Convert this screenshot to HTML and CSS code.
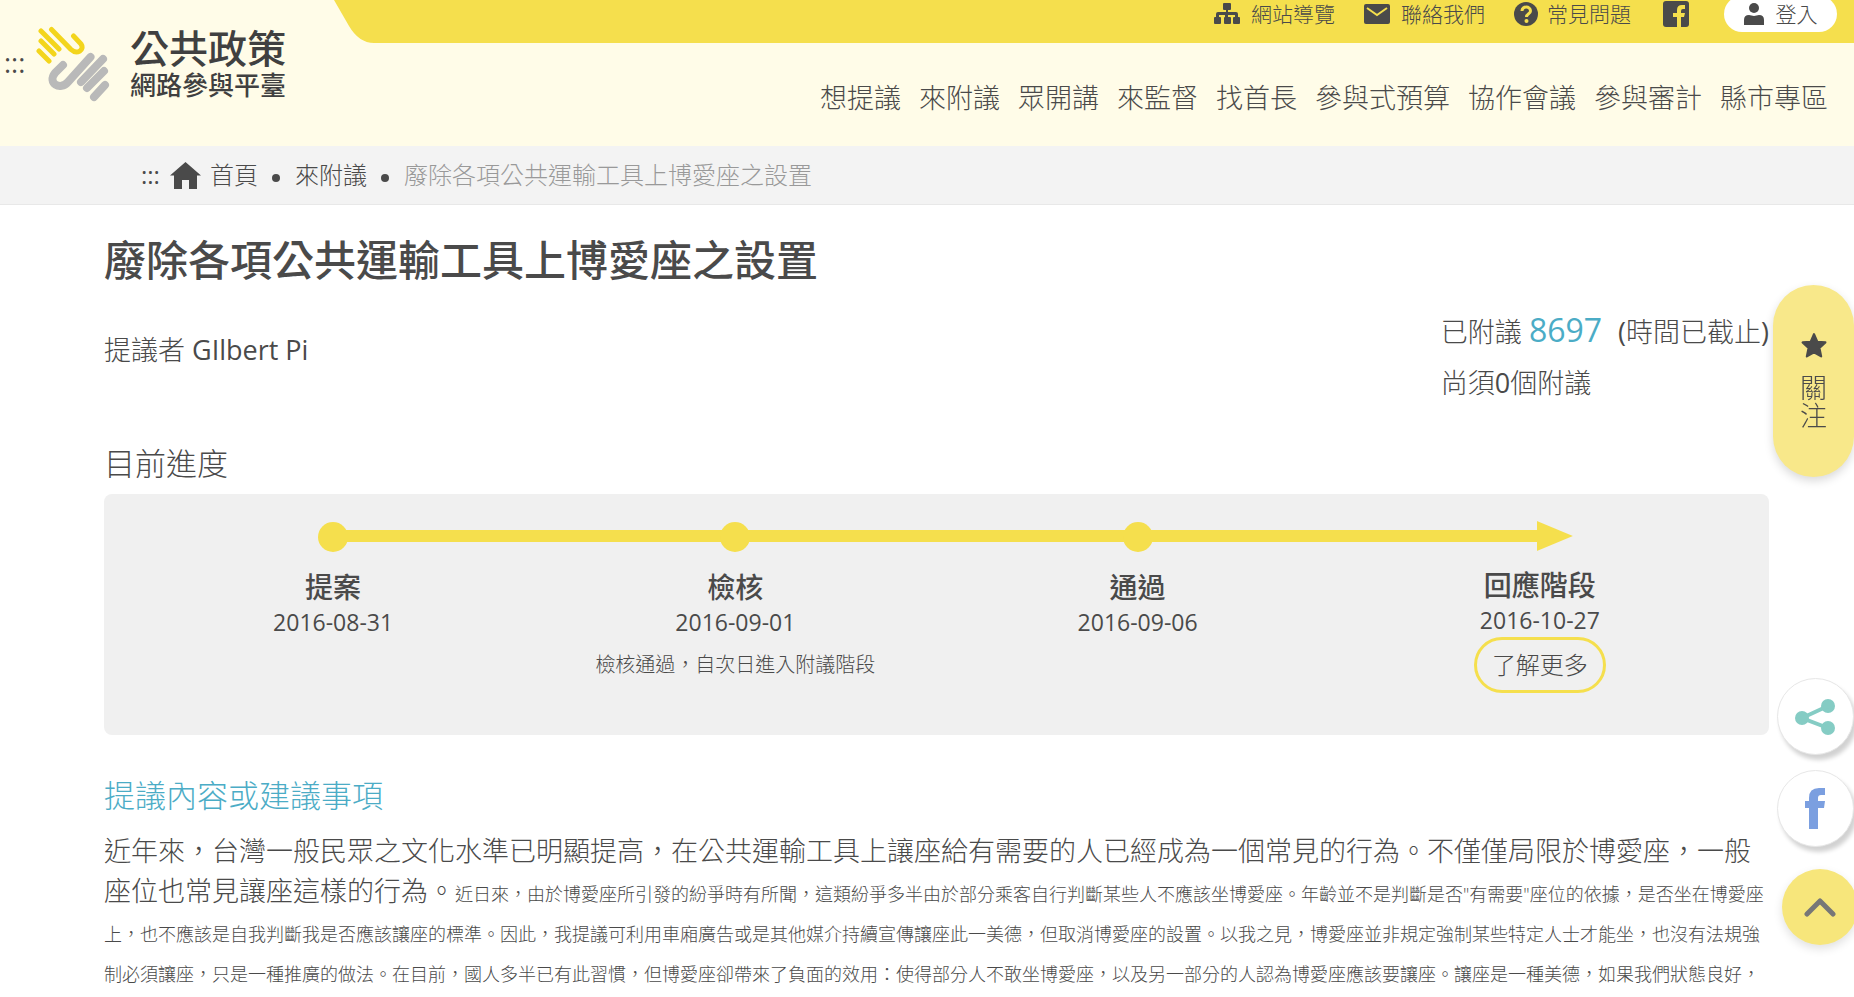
FILE: index.html
```html
<!DOCTYPE html>
<html lang="zh-Hant">
<head>
<meta charset="utf-8">
<meta name="viewport" content="width=device-width, initial-scale=1">
<title>公共政策網路參與平臺</title>
<link rel="stylesheet" href="styles.css">
</head>
<body>
<header class="header">
  <div class="brand">
    <a class="access-key" href="#nav">:::</a>
    <a class="logo" href="#">
      <svg class="logo-mark" viewBox="0 0 74 76" aria-hidden="true">
        <g fill="none" stroke="#f3d51c" stroke-width="5" stroke-linecap="round" stroke-linejoin="round">
          <path d="M5 5 L23 23M5 15 L18 28M3 25 L13 35"/>
          <path d="M15.500 3.500 L35 23.500 C41 29 49 24 45 18 L37.500 10"/>
        </g>
        <g fill="none" stroke="#b9b9b9" stroke-width="8" stroke-linecap="round">
          <path d="M54.500 31 L32 56 C24 65 11 57 19 47 L27 39"/>
          <path d="M67 33 L45 56M68 45 L51 62M69 59 L58 71"/>
        </g>
      </svg>
      <span class="logo-text"><span class="logo-main">公共政策</span><span class="logo-sub">網路參與平臺</span></span>
    </a>
  </div>
  <div class="header-right">
    <div class="topbar">
      <svg class="topbar-edge" viewBox="0 0 40 43" aria-hidden="true"><path fill="#fffce8" d="M0 0 L15 26 Q25 43 40 43 L0 43Z"/></svg>
      <a class="top-link" href="#"><svg class="ico-map" viewBox="0 0 26 22" aria-hidden="true"><g fill="#4a4a4a"><rect x="9" y="0" width="8" height="7" rx="1"/><rect x="0" y="14" width="7" height="7" rx="1"/><rect x="10" y="14" width="7" height="7" rx="1"/><rect x="19" y="14" width="7" height="7" rx="1"/><path d="M12 6h2v3h8q2 0 2 2v4h-3v-3h-7v3h-3v-3H5v3H2v-4q0-2 2-2h8z"/></g></svg>網站導覽</a>
      <a class="top-link" href="#"><svg class="ico-mail" viewBox="0 0 26 20" aria-hidden="true"><rect width="26" height="20" rx="2" fill="#4a4a4a"/><path d="M3 4 L13 11 L23 4" fill="none" stroke="#f5df4d" stroke-width="2"/></svg>聯絡我們</a>
      <a class="top-link help" href="#"><svg class="ico-help" viewBox="0 0 24 24" aria-hidden="true"><circle cx="12" cy="12" r="12" fill="#4a4a4a"/><path d="M8 9 C8 3.600 16.500 4 16.500 9 C16.500 12 12.500 11.500 12.500 15" fill="none" stroke="#f5df4d" stroke-width="3"/><circle cx="12.500" cy="19" r="2" fill="#f5df4d"/></svg>常見問題</a>
      <a class="top-fb" href="#" aria-label="Facebook"><svg viewBox="0 0 26 26" aria-hidden="true"><rect width="26" height="26" rx="3" fill="#4a4a4a"/><path d="M14 26V16h-4v-4h4V9q0-5 5-5h3v4h-2q-2 0-2 2v2h4l-1 4h-3v10z" fill="#f5df4d"/></svg></a>
      <button class="login" type="button"><svg viewBox="0 0 20 22" aria-hidden="true"><g fill="#4a4a4a"><circle cx="10" cy="5" r="5"/><path d="M0 22v-5q0-5 5-5l5 1 5-1q5 0 5 5v5z"/></g></svg>登入</button>
    </div>
    <nav class="nav" id="nav">
      <a href="#">想提議</a><a href="#">來附議</a><a href="#">眾開講</a><a href="#">來監督</a><a href="#">找首長</a><a href="#">參與式預算</a><a href="#">協作會議</a><a href="#">參與審計</a><a href="#">縣市專區</a>
    </nav>
  </div>
</header>

<nav class="crumbs" aria-label="路徑">
  <a class="crumb-key" href="#main">:::</a>
  <svg class="home" viewBox="0 0 31 27" aria-hidden="true"><path fill="#4a4a4a" d="M15.500 0 L31 13.500 H27 V27 H19 V18 H12 V27 H4 V13.500 H0Z"/></svg>
  <a href="#">首頁</a><i class="dot"></i><a href="#">來附議</a><i class="dot"></i><span class="current">廢除各項公共運輸工具上博愛座之設置</span>
</nav>

<main class="main" id="main">
  <h1 class="title">廢除各項公共運輸工具上博愛座之設置</h1>
  <div class="summary">
    <p class="author">提議者 <span class="latin">GIlbert Pi</span></p>
    <div class="votes">
      <p>已附議 <span class="count">8697</span><span class="closed"><span class="latin">(</span>時間已截止<span class="latin">)</span></span></p>
      <p>尚須<span class="latin">0</span>個附議</p>
    </div>
  </div>

  <h2 class="progress-title">目前進度</h2>
  <ol class="progress">
    <li class="step"><span class="track"></span><h3>提案</h3><time class="latin">2016-08-31</time></li>
    <li class="step"><span class="track"></span><h3>檢核</h3><time class="latin">2016-09-01</time><p class="note">檢核通過，自次日進入附議階段</p></li>
    <li class="step"><span class="track"></span><h3>通過</h3><time class="latin">2016-09-06</time></li>
    <li class="step last"><span class="track"></span><h3>回應階段</h3><time class="latin">2016-10-27</time><button class="more" type="button">了解更多</button></li>
  </ol>

  <h2 class="content-title">提議內容或建議事項</h2>
  <p class="content"><span class="lead">近年來，台灣一般民眾之文化水準已明顯提高，在公共運輸工具上讓座給有需要的人已經成為一個常見的行為。不僅僅局限於博愛座，一般座位也常見讓座這樣的行為。</span>近日來，由於博愛座所引發的紛爭時有所聞，這類紛爭多半由於部分乘客自行判斷某些人不應該坐博愛座。年齡並不是判斷是否"有需要"座位的依據，是否坐在博愛座上，也不應該是自我判斷我是否應該讓座的標準。因此，我提議可利用車廂廣告或是其他媒介持續宣傳讓座此一美德，但取消博愛座的設置。以我之見，博愛座並非規定強制某些特定人士才能坐，也沒有法規強制必須讓座，只是一種推廣的做法。在目前，國人多半已有此習慣，但博愛座卻帶來了負面的效用：使得部分人不敢坐博愛座，以及另一部分的人認為博愛座應該要讓座。讓座是一種美德，如果我們狀態良好，</p>
</main>

<button class="follow" type="button"><svg viewBox="0 0 24 24" aria-hidden="true"><path d="M12 2 L15 9 L22.500 9.600 L17 14.800 L18.600 22.500 L12 18.800 L5.400 22.500 L7 14.800 L1.500 9.600 L9 9Z" fill="#4a4a4a" stroke="#4a4a4a" stroke-width="2" stroke-linejoin="round"/></svg><span>關<br>注</span></button>
<div class="social">
  <button class="round" type="button" aria-label="分享"><svg class="ico-share" viewBox="0 0 40 36" aria-hidden="true"><g fill="#85ccc4"><circle cx="7" cy="19" r="7"/><circle cx="33" cy="7" r="7"/><circle cx="33" cy="29" r="7"/></g><path d="M33 7 L7 19 L33 29" fill="none" stroke="#85ccc4" stroke-width="4"/></svg></button>
  <button class="round" type="button" aria-label="Facebook"><svg class="ico-f" viewBox="0 0 20 41" aria-hidden="true"><path fill="#7b9fe0" d="M4 41V20H0v-7h4V10Q4 0 14 0h6v7h-4q-3 0-3 3v3h7l-1 7h-6v21z"/></svg></button>
</div>
<button class="to-top" type="button" aria-label="回頂端"><svg viewBox="0 0 32 19" aria-hidden="true"><path d="M3 16 L16 3 L29 16" fill="none" stroke="#777" stroke-width="5" stroke-linecap="round" stroke-linejoin="round"/></svg></button>
</body>
</html>
```
FILE: styles.css
```css
* { box-sizing: border-box; }

body {
  margin: 0;
  background: #fff;
  color: #4a4a4a;
  font-family: "Open Sans", "Noto Sans CJK TC", sans-serif;
  font-size: 27px;
  font-weight: 300;
  line-height: 40px;
}

h1, h2, h3, p, ol { margin: 0; padding: 0; }
h2 { font-weight: 300; }
a { color: inherit; text-decoration: none; }
button { border: 0; padding: 0; color: inherit; font: inherit; cursor: pointer; }
svg { display: block; flex: none; }
.latin { font-weight: 400; }

/* Header */
.header { display: flex; height: 146px; background: #fffce8; }
.brand { display: flex; align-items: flex-start; flex: 0 0 334px; padding: 26px 0 0 4px; }
.access-key { width: 32px; margin-top: 17px; font-weight: 400; }
.logo { display: flex; gap: 20px; font-weight: 500; color: #404040; }
.logo-mark { width: 74px; height: 76px; }
.logo-text { display: flex; flex-direction: column; }
.logo-main { font-size: 39px; line-height: 44px; }
.logo-sub { font-size: 26px; line-height: 30px; }
.header-right { flex: 1; }

.topbar {
  display: flex;
  justify-content: flex-end;
  height: 43px;
  padding-right: 17px;
  background: #f5df4d;
  font-size: 21px;
  line-height: 28px;
}
.topbar-edge { width: 40px; height: 43px; margin-right: auto; }
.top-link { display: flex; align-items: center; gap: 11px; height: 28px; margin-right: 29px; }
.help { gap: 9px; margin-right: 32px; }
.ico-map { width: 26px; height: 22px; }
.ico-mail { width: 26px; height: 20px; }
.ico-help { width: 24px; height: 24px; }
.top-fb { width: 26px; margin: 1px 35px 0 0; }
.login {
  display: flex;
  align-items: center;
  justify-content: center;
  gap: 12px;
  width: 113px;
  height: 36px;
  margin-top: -4px;
  border-radius: 18px;
  background: #fff;
}
.login svg { width: 20px; height: 22px; }

.nav { display: flex; justify-content: flex-end; gap: 18px; padding: 35px 26px 0 0; }

/* Breadcrumb */
.crumbs {
  display: flex;
  align-items: center;
  height: 59px;
  padding-left: 141px;
  border-bottom: 1px solid #e8e8e8;
  background: #f3f3f3;
  font-size: 24px;
}
.crumb-key { font-weight: 400; width: 29px; }
.home { width: 31px; height: 27px; margin-right: 9px; }
.dot { width: 8px; height: 8px; margin: 6px 15px 0 14px; border-radius: 50%; background: #4a4a4a; }
.current { color: #999; }

/* Proposal */
.main { padding: 25px 85px 0 104px; }
.title { font-size: 42px; font-weight: 500; line-height: 60px; }
.summary { display: flex; justify-content: space-between; align-items: flex-start; margin-top: 14px; line-height: 51px; }
.author { padding-top: 20px; }
.count { font-size: 32px; font-weight: 400; color: #4bacc6; }
.closed { margin-left: 16px; }

.progress-title { margin-top: 32px; font-size: 31px; line-height: 46px; }
.progress {
  display: grid;
  grid-template-columns: repeat(4, 1fr);
  min-height: 241px;
  margin-top: 8px;
  padding: 28px 28px 0;
  border-radius: 8px;
  background: #f0f0f0;
  list-style: none;
}
.step { position: relative; display: flex; flex-direction: column; align-items: center; }
.track { width: 30px; height: 30px; border-radius: 50%; background: #f5df4d; }
.step:not(.last)::before {
  content: "";
  position: absolute;
  top: 8px;
  left: 50%;
  width: 100%;
  height: 12px;
  background: #f5df4d;
}
.last .track { width: 36px; margin: -1px 0 0 30px; border-radius: 0; clip-path: polygon(0 0, 100% 50%, 0 100%); }
.step h3 { margin-top: 17px; font-size: 28px; font-weight: 500; line-height: 36px; }
.step time { font-size: 23px; line-height: 34px; }
.last h3 { margin-top: 16px; }
.note { margin-top: 9px; font-size: 20px; line-height: 34px; white-space: nowrap; }
.more {
  width: 132px;
  height: 56px;
  border: 3px solid #f5df4d;
  border-radius: 28px;
  background: transparent;
  font-size: 24px;
  line-height: 34px;
}

.content-title { margin-top: 37px; font-size: 31px; line-height: 46px; color: #4bacc6; }
.content { margin-top: 16px; font-size: 18px; line-height: 40px; }
.lead { font-size: 27px; line-height: 27px; }

/* Floating controls */
.follow {
  position: fixed;
  top: 285px;
  right: 0;
  display: flex;
  flex-direction: column;
  align-items: center;
  justify-content: center;
  gap: 16px;
  width: 81px;
  height: 192px;
  border-radius: 41px;
  background: #f8e88a;
  box-shadow: 0 4px 10px rgba(0, 0, 0, .15);
  line-height: 28px;
}
.follow svg { width: 26px; height: 26px; }
.social { position: fixed; top: 678px; right: 0; display: flex; flex-direction: column; gap: 15px; }
.round {
  display: flex;
  align-items: center;
  justify-content: center;
  width: 77px;
  height: 77px;
  padding-right: 2px;
  border: 1px solid #e6e6e6;
  border-radius: 50%;
  background: #fff;
  box-shadow: 3px 5px 4px rgba(0, 0, 0, .18);
}
.ico-share { width: 40px; height: 36px; }
.ico-f { width: 20px; height: 41px; }
.to-top {
  position: fixed;
  top: 869px;
  right: -4px;
  display: flex;
  align-items: center;
  justify-content: center;
  width: 76px;
  height: 76px;
  border-radius: 50%;
  background: #f7e67b;
  box-shadow: 0 4px 10px rgba(0, 0, 0, .12);
}
.to-top svg { width: 32px; height: 19px; }
```
